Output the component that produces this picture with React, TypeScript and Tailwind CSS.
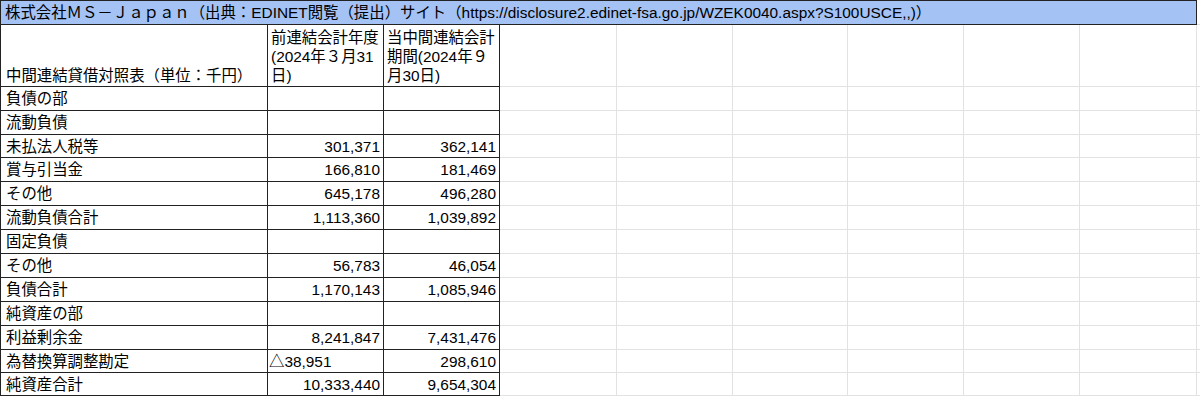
import React from "react"

const font = { fontFamily: '"Liberation Sans", "Noto Sans CJK JP", sans-serif' }

// widths of the grid columns after A, B, C
const extraCols = [117, 116, 115, 116, 116, 117, 40]

interface Row {
  label: string
  prev: string
  cur: string
  h: number
}

const rows: Row[] = [
  { label: "負債の部", prev: "", cur: "", h: 24 },
  { label: "流動負債", prev: "", cur: "", h: 24 },
  { label: "未払法人税等", prev: "301,371", cur: "362,141", h: 23 },
  { label: "賞与引当金", prev: "166,810", cur: "181,469", h: 24 },
  { label: "その他", prev: "645,178", cur: "496,280", h: 24 },
  { label: "流動負債合計", prev: "1,113,360", cur: "1,039,892", h: 24 },
  { label: "固定負債", prev: "", cur: "", h: 24 },
  { label: "その他", prev: "56,783", cur: "46,054", h: 24 },
  { label: "負債合計", prev: "1,170,143", cur: "1,085,946", h: 24 },
  { label: "純資産の部", prev: "", cur: "", h: 24 },
  { label: "利益剰余金", prev: "8,241,847", cur: "7,431,476", h: 24 },
  { label: "為替換算調整勘定", prev: "△38,951", cur: "298,610", h: 23 },
  { label: "純資産合計", prev: "10,333,440", cur: "9,654,304", h: 23 },
]

function GridCells() {
  return (
    <>
      {extraCols.map((w, i) => (
        <div
          key={i}
          className="shrink-0 border-r border-b border-[#e2e2e2]"
          style={{ width: w }}
        />
      ))}
    </>
  )
}

export default function App() {
  return (
    <div className="w-[1200px] h-[398px] overflow-hidden bg-white text-[15.4px] text-black" style={font}>
      {/* title row */}
      <div className="flex h-[25px]">
        <div className="w-[1197px] shrink-0 bg-[#a4c2f4] border border-[#222] flex items-center pl-[4px] leading-[20px] whitespace-nowrap">
          株式会社ＭＳ－Ｊａｐａｎ（出典：EDINET閲覧（提出）サイト（https://disclosure2.edinet-fsa.go.jp/WZEK0040.aspx?S100USCE,,)）
        </div>
        <div className="flex-1 border-b border-[#e2e2e2]" />
      </div>

      {/* column headers */}
      <div className="flex h-[62px]">
        <div className="w-[268px] shrink-0 border-l border-r border-b border-[#222] flex items-end pl-[5px] pb-[1px] leading-[19px] whitespace-nowrap">
          中間連結貸借対照表（単位：千円）
        </div>
        <div className="w-[116px] shrink-0 border-r border-b border-[#222] pl-[3px] pt-[3px] leading-[19px] whitespace-nowrap">
          <div>前連結会計年度</div>
          <div>(2024年３月31</div>
          <div>日)</div>
        </div>
        <div className="w-[116px] shrink-0 border-r border-b border-[#222] pl-[3px] pt-[3px] leading-[19px] whitespace-nowrap">
          <div>当中間連結会計</div>
          <div>期間(2024年９</div>
          <div>月30日)</div>
        </div>
        <GridCells />
      </div>

      {rows.map((r, i) => (
        <div key={i} className="flex" style={{ height: r.h }}>
          <div className="w-[268px] shrink-0 border-l border-r border-b border-[#222] flex items-center pl-[5px] pt-[1px] leading-[20px] whitespace-nowrap">
            {r.label}
          </div>
          <div
            className={`w-[116px] shrink-0 border-r border-b border-[#222] flex items-center pt-[1px] leading-[20px] whitespace-nowrap ${
              r.prev.startsWith("△") ? "justify-start pl-[1px]" : "justify-end pr-[3px]"
            }`}
          >
            {r.prev}
          </div>
          <div className="w-[116px] shrink-0 border-r border-b border-[#222] flex items-center justify-end pr-[3px] pt-[1px] leading-[20px] whitespace-nowrap">
            {r.cur}
          </div>
          <GridCells />
        </div>
      ))}
    </div>
  )
}
